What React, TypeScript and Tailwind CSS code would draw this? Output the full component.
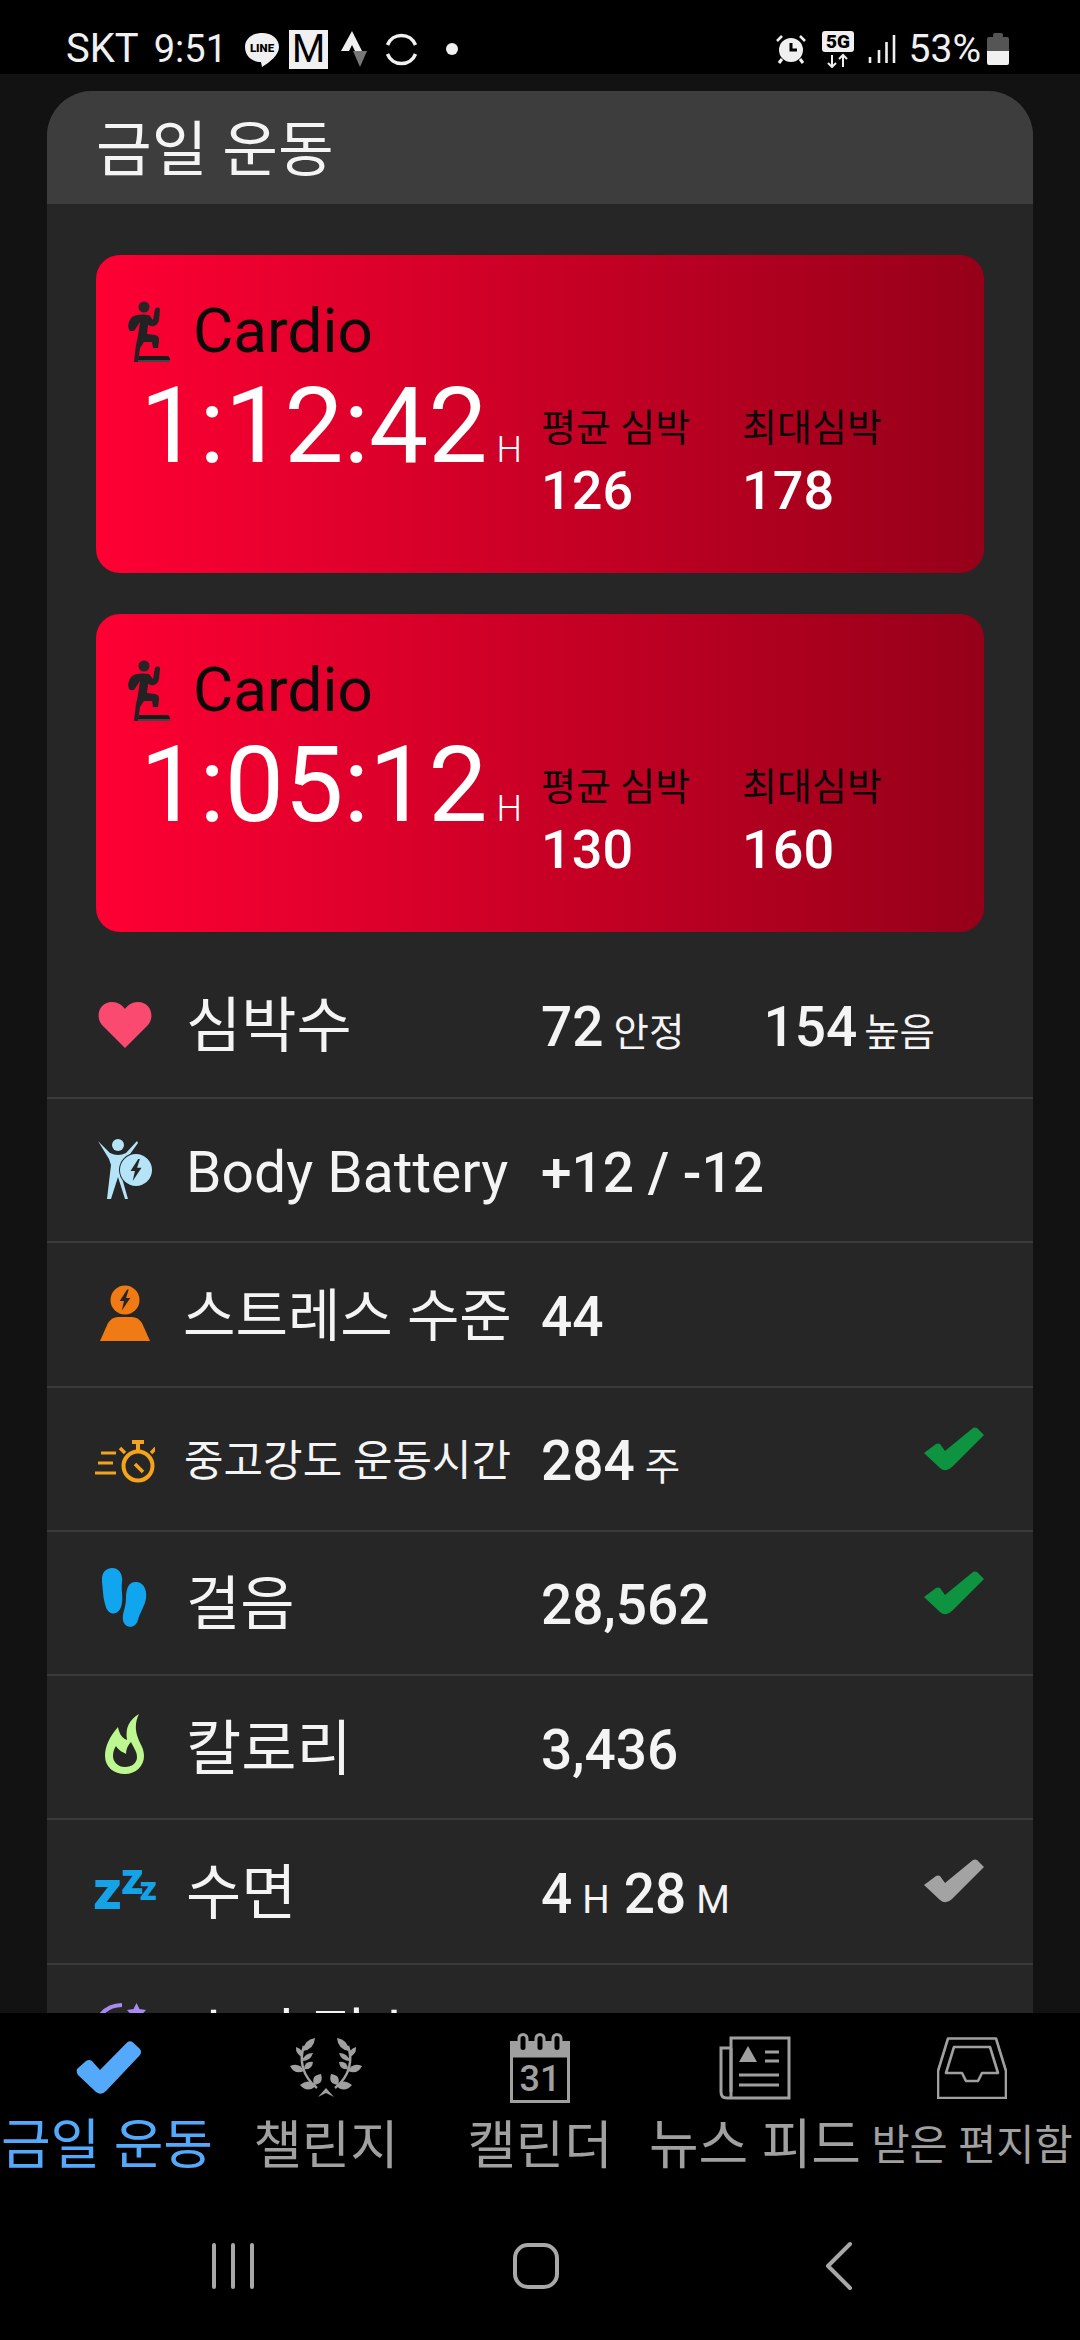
import React from "react";

const FONT = "font-['Roboto','Noto_Sans_CJK_KR',sans-serif]";

function Runner() {
  return (
    <svg viewBox="0 0 44 62" className="w-[44px] h-[62px] block">
      <ellipse cx="18" cy="7" rx="5.5" ry="5.5" fill="#262626" />
      <path d="M6 17 C10 14 18 14 23 15 L27 20 L29 9 C30 7 33 7 34 9 L33 20 C32 25 28 27 25 26 L22 25 L21 34 L29 35 C33 36 33 38 33 41 L32 48 L27 48 L26 42 L18 42 L14 48 L12 62 L8 62 L10 45 L12 36 L14 22 L8 31 L4 31 C1 28 2 21 6 17 Z" fill="#222" />
      <path d="M13 56 H41 C43 56 44 58 44 60 H12 Z" fill="#1a1a1a" />
      <rect x="12" y="60" width="32" height="2" fill="#444" />
    </svg>
  );
}

function WorkoutCard({ time, avg, max }: { time: string; avg: string; max: string }) {
  return (
    <div className="relative h-[318px] rounded-[24px] bg-gradient-to-r from-[#ff0033] to-[#960019] overflow-hidden">
      <div className="flex items-center pl-[30px] pt-[41px] gap-[23px]">
        <Runner />
        <span className="text-[62px] leading-[70px] text-[#0a0a0a]">Cardio</span>
      </div>
      <div className="flex items-baseline pl-[44px] mt-[0px]">
        <span className="text-[105.5px] leading-[120px] font-normal text-white">{time}</span>
        <span className="text-[36px] leading-[40px] font-light text-white ml-[9px]">H</span>
      </div>
      <div className="absolute left-[445px] top-[148px] w-[200px]">
        <div className="text-[38px] leading-[50px] text-[#0a0a0a] whitespace-nowrap">평균 심박</div>
        <div className="text-[54px] leading-[64px] font-medium text-white mt-[6px]">{avg}</div>
      </div>
      <div className="absolute left-[646px] top-[148px] w-[200px]">
        <div className="text-[38px] leading-[50px] text-[#0a0a0a] whitespace-nowrap">최대심박</div>
        <div className="text-[54px] leading-[64px] font-medium text-white mt-[6px]">{max}</div>
      </div>
    </div>
  );
}

function Heart() {
  return (
    <svg viewBox="0 0 54 48" className="w-[54px] h-[48px]">
      <path d="M27 47 L4 24 C-3 16 1 1 14 1 C20 1 24 4 27 8 C30 4 34 1 40 1 C53 1 57 16 50 24 Z" fill="#fb4a70" />
    </svg>
  );
}
function Bolt({ cx, cy, s, fill }: { cx: number; cy: number; s: number; fill: string }) {
  return <path transform={`translate(${cx} ${cy}) scale(${s})`} d="M2 -10 L-5 1 L-1 1 L-3 10 L5 -2 L1 -2 L3.5 -10 Z" fill={fill} />;
}
function BodyBatteryIcon() {
  return (
    <svg viewBox="0 0 54 60" className="w-[54px] h-[60px]">
      <circle cx="20" cy="6" r="6" fill="#b5e4f8" />
      <path d="M0 2 L12 14 Q20 18 28 14 L39 2 L40 4 L27 22 L22 32 L30 60 L27 60 L20 38 L13 60 L9 60 L13 26 L11 20 Z" fill="#b5e4f8" />
      <circle cx="38" cy="31" r="17" fill="#262626" />
      <circle cx="38" cy="31" r="16" fill="#b5e4f8" />
      <Bolt cx={38} cy={31} s={1.1} fill="#262626" />
    </svg>
  );
}
function StressIcon() {
  return (
    <svg viewBox="0 0 50 56" className="w-[50px] h-[56px]">
      <circle cx="25" cy="15" r="14.5" fill="#f07a13" />
      <Bolt cx={25} cy={15} s={1.05} fill="#262626" />
      <path d="M0 56 L8 38 Q12 32 18 32 L32 32 Q38 32 42 38 L50 56 Z" fill="#f07a13" />
    </svg>
  );
}
function StopwatchIcon() {
  return (
    <svg viewBox="0 0 61 43" className="w-[61px] h-[43px]">
      <g stroke="#f5a31a" fill="none">
        <circle cx="44" cy="26" r="14.5" strokeWidth="4" />
        <path d="M41 24 L49 32" strokeWidth="3.500" />
        <path d="M38 2 H50" strokeWidth="4" />
        <path d="M44 3 V10" strokeWidth="4" />
        <path d="M31 13 L26 8 M57 13 L62 8" strokeWidth="3.500" />
        <path d="M7 13 H22 M4 23 H19 M1 33 H22" strokeWidth="3" />
      </g>
    </svg>
  );
}
function Feet() {
  return (
    <svg viewBox="0 0 46 60" className="w-[46px] h-[60px]">
      <path d="M10 0 C17 0 21 6 20 14 C19 22 21 28 20 34 C19 48 6 50 3 36 C1 30 1 22 0 14 C-1 5 4 0 10 0 Z" fill="#11a5ef" />
      <path d="M35 14 C42 15 45 22 44 30 C43 38 38 44 36 52 C33 62 22 60 21 52 C20 45 24 40 24 30 C24 20 27 13 35 14 Z" fill="#11a5ef" />
    </svg>
  );
}
function Flame() {
  return (
    <svg viewBox="0 0 40 60" className="w-[40px] h-[60px]">
      <path fillRule="evenodd" d="M34 0 C24 6 20 14 22 26 C16 24 14 18 13 13 C5 22 0 32 0 42 C0 53 9 60 20 60 C31 60 39 52 39 42 C39 34 35 30 33 24 C30 16 30 8 34 0 Z M20 53 C13 53 8 48 8 42 C8 38 9 35 11 32 C14 37 18 38 21 40 C21 35 23 31 26 28 C28 33 32 37 32 43 C32 49 27 53 20 53 Z" fill="#bdf78f" />
    </svg>
  );
}
function Zzz() {
  return (
    <svg viewBox="0 0 62 40" className="w-[62px] h-[40px] overflow-visible">
      <g fill="#13a3e6" fontFamily="Roboto" fontWeight="900">
        <text x="-1" y="39" fontSize="56">z</text>
        <text x="27" y="24" fontSize="44">z</text>
        <text x="45.500" y="30" fontSize="34">z</text>
      </g>
    </svg>
  );
}
function Moon() {
  return (
    <svg viewBox="0 0 54 60" className="w-[54px] h-[60px]">
      <path d="M30 2 A28 28 0 0 0 4 40 A30 30 0 0 0 54 44" fill="none" stroke="#a98af0" strokeWidth="4" />
      <path d="M44.500 0 L47.500 6 L54 7 L49.500 12 L51 19 L44.500 16 L38 19 L39.500 12 L35 7 L41.500 6 Z" fill="#a98af0" />
    </svg>
  );
}
function Check({ color }: { color: string }) {
  return (
    <svg viewBox="0 0 60 44" className="w-[60px] h-[44px] block">
      <path d="M0 26 L12 17 Q14 16 16 17 L21 24 L49 1 Q51 0 53 1 L60 8 L28 40 Q22 46 16 41 Z" fill={color} />
    </svg>
  );
}

const ICON_COL = "w-[139px] flex justify-center pl-[16px] pr-[0px] shrink-0";

function Row({
  icon,
  label,
  size = "text-[60px]",
  value,
  check,
  inset = "pl-[0px]",
  lift = "mb-[0px]",
}: {
  icon: React.ReactNode;
  label: string;
  size?: string;
  value: React.ReactNode;
  check?: string;
  inset?: string;
  lift?: string;
}) {
  return (
    <div className="relative flex items-center h-[144.25px] pt-[5px] border-b-2 border-[#3a3a3a] shrink-0">
      <div className={`${ICON_COL} ${lift}`}>{icon}</div>
      <div className={`w-[355px] shrink-0 ${size} ${inset} leading-[70px] text-[#f4f4f4] whitespace-nowrap`}>{label}</div>
      <div className="flex-1 flex items-baseline text-[#f4f4f4] whitespace-nowrap">{value}</div>
      {check ? (
        <div className="absolute right-[49px] top-[39px]">
          <Check color={check} />
        </div>
      ) : null}
    </div>
  );
}
const Num = ({ children }: { children: React.ReactNode }) => (
  <span className="text-[55px] leading-[70px] font-medium">{children}</span>
);
const Unit = ({ children }: { children: React.ReactNode }) => (
  <span className="text-[38.5px] leading-[50px] ml-[10px]">{children}</span>
);

function LineIcon() {
  return (
    <svg viewBox="0 0 36 36" className="w-[36px] h-[36px]">
      <path d="M18 1 C28 1 35 7 35 15 C35 23 26 30 18 35 L17 30 C8 30 1 24 1 15 C1 7 8 1 18 1 Z" fill="#f0f0f0" />
      <text x="18" y="20" textAnchor="middle" fontFamily="Roboto" fontWeight="900" fontSize="11.5" fill="#000">LINE</text>
    </svg>
  );
}

function StatusBar() {
  return (
    <div className="h-[74px] bg-black text-[#f0f0f0] shrink-0 flex items-center justify-between pl-[66px] pr-[71px]">
      <div className="flex items-center pt-[24px]">
        <span className="text-[40px] leading-[46px]">SKT</span>
        <span className="text-[38px] leading-[46px] ml-[15px]">9:51</span>
        <span className="ml-[17px] mt-[2px]"><LineIcon /></span>
        <span className="ml-[9px] w-[39px] h-[39px] bg-[#f0f0f0] flex items-center justify-center text-black text-[38px] leading-[39px]">M</span>
        <svg viewBox="0 0 26 37" className="w-[26px] h-[37px] ml-[13px]">
          <path d="M11 0 L21 20 L14 20 L11 14 L8 20 L0 20 Z" fill="#f0f0f0" />
          <path d="M12 20 L26 20 L19 36 Z" fill="#777" />
        </svg>
        <svg viewBox="0 0 33 33" className="w-[33px] h-[33px] ml-[18px]">
          <path d="M2.500 12 A15 15 0 0 1 30.500 12 M2.500 21 A15 15 0 0 0 30.500 21" fill="none" stroke="#f0f0f0" strokeWidth="3.500" />
        </svg>
        <span className="w-[12px] h-[12px] rounded-full bg-[#f0f0f0] ml-[28px]" />
      </div>
      <div className="flex items-center pt-[24px]">
        <svg viewBox="0 0 30 30" className="w-[30px] h-[30px]">
          <circle cx="15" cy="16" r="12" fill="#f0f0f0" />
          <path d="M15 9 V16 H21" stroke="#000" strokeWidth="3" fill="none" />
          <path d="M1 7 L6 2 M29 7 L24 2" stroke="#f0f0f0" strokeWidth="2.500" />
          <path d="M6 25 L3 29 M24 25 L27 29" stroke="#f0f0f0" strokeWidth="3" />
        </svg>
        <svg viewBox="0 0 32 37" className="w-[32px] h-[37px] ml-[16px]">
          <rect x="0" y="0" width="32" height="21" rx="3" fill="#f0f0f0" />
          <text x="16" y="17" textAnchor="middle" fontFamily="Roboto" fontWeight="900" fontSize="19" fill="#000">5G</text>
          <path d="M10 24 V36 M6 32 L10 36 L14 32 M21 36 V24 M17 28 L21 24 L25 28" stroke="#f0f0f0" strokeWidth="2" fill="none" />
        </svg>
        <svg viewBox="0 0 28 30" className="w-[28px] h-[30px] ml-[14px]">
          <path d="M2 23 V29 M11 16 V29 M18.500 8 V29 M26 1 V29" stroke="#f0f0f0" strokeWidth="2.600" fill="none" />
        </svg>
        <span className="text-[39px] leading-[46px] ml-[13px]">53%</span>
        <svg viewBox="0 0 22 32" className="w-[22px] h-[32px] ml-[6px]">
          <rect x="6" y="0" width="10" height="5" rx="2" fill="#555" />
          <path d="M0 6 Q0 4 2 4 H20 Q22 4 22 6 V18 H0 Z" fill="#555" />
          <path d="M0 18 H22 V30 Q22 32 20 32 H2 Q0 32 0 30 Z" fill="#f0f0f0" />
        </svg>
      </div>
    </div>
  );
}

function Leaf({ a, b, w }: { a: [number, number]; b: [number, number]; w: number }) {
  const mx = (a[0] + b[0]) / 2;
  const my = (a[1] + b[1]) / 2;
  const dx = b[0] - a[0];
  const dy = b[1] - a[1];
  const l = Math.hypot(dx, dy) || 1;
  const nx = (-dy / l) * w;
  const ny = (dx / l) * w;
  return (
    <path
      d={`M${a[0]} ${a[1]} Q${mx + nx} ${my + ny} ${b[0]} ${b[1]} Q${mx - nx} ${my - ny} ${a[0]} ${a[1]} Z`}
      fill="#a0a0a0"
    />
  );
}
function Laurel() {
  const side = (
    <>
      <path d="M14 8 C9 22 12 38 27 50" fill="none" stroke="#a0a0a0" strokeWidth="2.500" />
      <Leaf a={[13, 13]} b={[25, 0]} w={7} />
      <Leaf a={[13, 19]} b={[6, 9]} w={5} />
      <Leaf a={[12, 23]} b={[23, 15]} w={5} />
      <Leaf a={[14, 33]} b={[0, 28]} w={7} />
      <Leaf a={[14, 31]} b={[23, 24]} w={6} />
      <Leaf a={[26, 48]} b={[10, 47]} w={8} />
      <Leaf a={[24, 47]} b={[31, 36]} w={8} />
    </>
  );
  return (
    <svg viewBox="0 0 72 60" className="w-[72px] h-[60px]">
      {side}
      <g transform="translate(72 0) scale(-1 1)">{side}</g>
      <path d="M36 50 L28 59 L36 55 L44 59 Z" fill="#a0a0a0" />
    </svg>
  );
}
function Calendar() {
  return (
    <svg viewBox="0 0 60 70" className="w-[60px] h-[70px]">
      <rect x="0" y="8" width="60" height="16" fill="#a0a0a0" />
      <rect x="1.500" y="23" width="57" height="45.500" fill="#000" stroke="#a0a0a0" strokeWidth="3" />
      {[9, 26, 43].map((x) => (
        <rect key={x} x={x} y="1.500" width="8" height="17" rx="4" fill="#000" stroke="#a0a0a0" strokeWidth="3" />
      ))}
      <text x="30" y="58" textAnchor="middle" fontFamily="Roboto" fontWeight="500" fontSize="36" fill="#a0a0a0">31</text>
    </svg>
  );
}
function News() {
  return (
    <svg viewBox="0 0 72 64" className="w-[72px] h-[64px]">
      <g fill="none" stroke="#a0a0a0" strokeWidth="3">
        <path d="M12 12 V62 H70 V2 H12 V12 H2 V56 Q2 62 8 62 H12" />
        <path d="M12 12 V56" />
        <path d="M46 16 H60 M46 25 H60 M20 39 H60 M20 49 H60" />
      </g>
      <path d="M20 26 L29 10 L38 26 Z" fill="#a0a0a0" />
    </svg>
  );
}
function Inbox() {
  return (
    <svg viewBox="0 0 70 62" className="w-[70px] h-[62px]">
      <g fill="none" stroke="#a0a0a0" strokeWidth="2.600" strokeLinejoin="round">
        <path d="M11 1.500 H59 L69 34 V61 H1 V34 Z" />
        <path d="M17 10 H53 L61 36 H45 L41 44 H29 L25 36 H9 Z" />
      </g>
    </svg>
  );
}

function NavItem({ icon, label, cls, w }: { icon: React.ReactNode; label: string; cls: string; w: string }) {
  return (
    <div className={`flex flex-col items-center shrink-0 ${w}`}>
      <div className="h-[80px] flex items-center justify-center">{icon}</div>
      <div className={`whitespace-nowrap mt-[8px] leading-[60px] ${cls}`}>{label}</div>
    </div>
  );
}

export default function App() {
  return (
    <div className={`${FONT} w-[1080px] h-[2340px] flex flex-col bg-black overflow-hidden`}>
      <StatusBar />
      <div className="flex-1 min-h-0 bg-[#121212] px-[47px] pt-[17px] overflow-hidden">
        <div className="bg-[#262626] rounded-t-[45px] overflow-hidden h-[1960px]">
          <div className="h-[113px] bg-[#3d3d3d] flex items-center pl-[49px] pt-[6px] text-[60.5px] leading-[70px] text-[#f4f4f4]">금일 운동</div>
          <div className="px-[49px] pt-[51px] flex flex-col gap-[41px]">
            <WorkoutCard time="1:12:42" avg="126" max="178" />
            <WorkoutCard time="1:05:12" avg="130" max="160" />
          </div>
          <div className="h-[167px] border-b-2 border-[#3a3a3a]">
            <div className="flex items-center h-full pt-[25px]">
              <div className={`${ICON_COL} mb-[4px]`}><Heart /></div>
              <div className="w-[355px] shrink-0 text-[60px] leading-[70px] text-[#f4f4f4]">심박수</div>
              <div className="flex items-baseline text-[#f4f4f4] whitespace-nowrap">
                <Num>72</Num><Unit>안정</Unit>
                <span className="ml-[79px] flex items-baseline"><Num>154</Num><span className="-ml-[3px]"><Unit>높음</Unit></span></span>
              </div>
            </div>
          </div>
          <Row icon={<BodyBatteryIcon />} lift="mb-[8px]" label="Body Battery" size="text-[57px]" value={<Num>+12 / -12</Num>} />
          <Row icon={<StressIcon />} lift="mb-[8px]" label="스트레스 수준" size="text-[57px]" inset="-ml-[3px]" value={<span className="ml-[3px]"><Num>44</Num></span>} />
          <Row icon={<StopwatchIcon />} label="중고강도 운동시간" size="text-[43px]" inset="-ml-[2px]" value={<span className="ml-[2px] flex items-baseline"><Num>284</Num><Unit>주</Unit></span>} check="#0e9440" />
          <Row icon={<Feet />} lift="mb-[14px]" label="걸음" size="text-[59px]" value={<Num>28,562</Num>} check="#0e9440" />
          <Row icon={<Flame />} lift="mb-[12px]" label="칼로리" value={<Num>3,436</Num>} />
          <Row icon={<Zzz />} lift="mb-[8px]" label="수면" value={<><Num>4</Num><Unit>H</Unit><span className="ml-[14px]"><Num>28</Num></span><Unit>M</Unit></>} check="#a3a3a3" />
          <div className="flex items-center h-[144px] shrink-0 pt-[2px]">
            <div className="w-[139px] flex justify-center pl-[4px] pr-[0px] mb-[10px] shrink-0"><Moon /></div>
            <div className="text-[60px] leading-[70px] text-[#f4f4f4]">수면 점수</div>
          </div>
        </div>
      </div>
      <div className="h-[327px] bg-black shrink-0">
        <div className="flex pt-[15px]">
          <NavItem
            w="w-[214px]"
            icon={
              <svg viewBox="0 0 66 54" className="w-[68px] h-[54px] ml-[4px]">
                <path d="M1 28 L10 20 Q13 18 16 20 L24 29 L51 1.500 Q54 -1 57 1.500 L64 8 Q66 11 64 14 L30 50 Q25 55 20 51 L2 34 Q0 31 1 28 Z" fill="#55a9fb" />
              </svg>
            }
            label="금일 운동"
            cls="text-[54px] text-[#55a9fb]"
          />
          <NavItem w="w-[224px]" icon={<Laurel />} label="챌린지" cls="text-[52.5px] text-[#a0a0a0]" />
          <NavItem w="w-[204px]" icon={<Calendar />} label="캘린더" cls="text-[52.5px] text-[#a0a0a0]" />
          <NavItem w="w-[226px]" icon={<News />} label="뉴스 피드" cls="text-[54px] text-[#a0a0a0]" />
          <NavItem w="w-[208px]" icon={<Inbox />} label="받은 편지함" cls="text-[41.5px] text-[#a0a0a0]" />
        </div>
        <div className="flex items-center pl-[212px] mt-[65px]">
          <svg viewBox="0 0 42 46" className="w-[42px] h-[46px]">
            <path d="M2 2 V44 M21 2 V44 M40 2 V44" stroke="#a8a8a8" strokeWidth="4" strokeLinecap="round" />
          </svg>
          <svg viewBox="0 0 46 46" className="w-[46px] h-[46px] ml-[259px]">
            <rect x="2" y="2" width="42" height="42" rx="13" fill="none" stroke="#a8a8a8" strokeWidth="4" />
          </svg>
          <svg viewBox="0 0 28 50" className="w-[28px] h-[50px] ml-[266px]">
            <path d="M25 3 L3 25 L25 47" fill="none" stroke="#a8a8a8" strokeWidth="4" strokeLinecap="round" strokeLinejoin="round" />
          </svg>
        </div>
      </div>
    </div>
  );
}
